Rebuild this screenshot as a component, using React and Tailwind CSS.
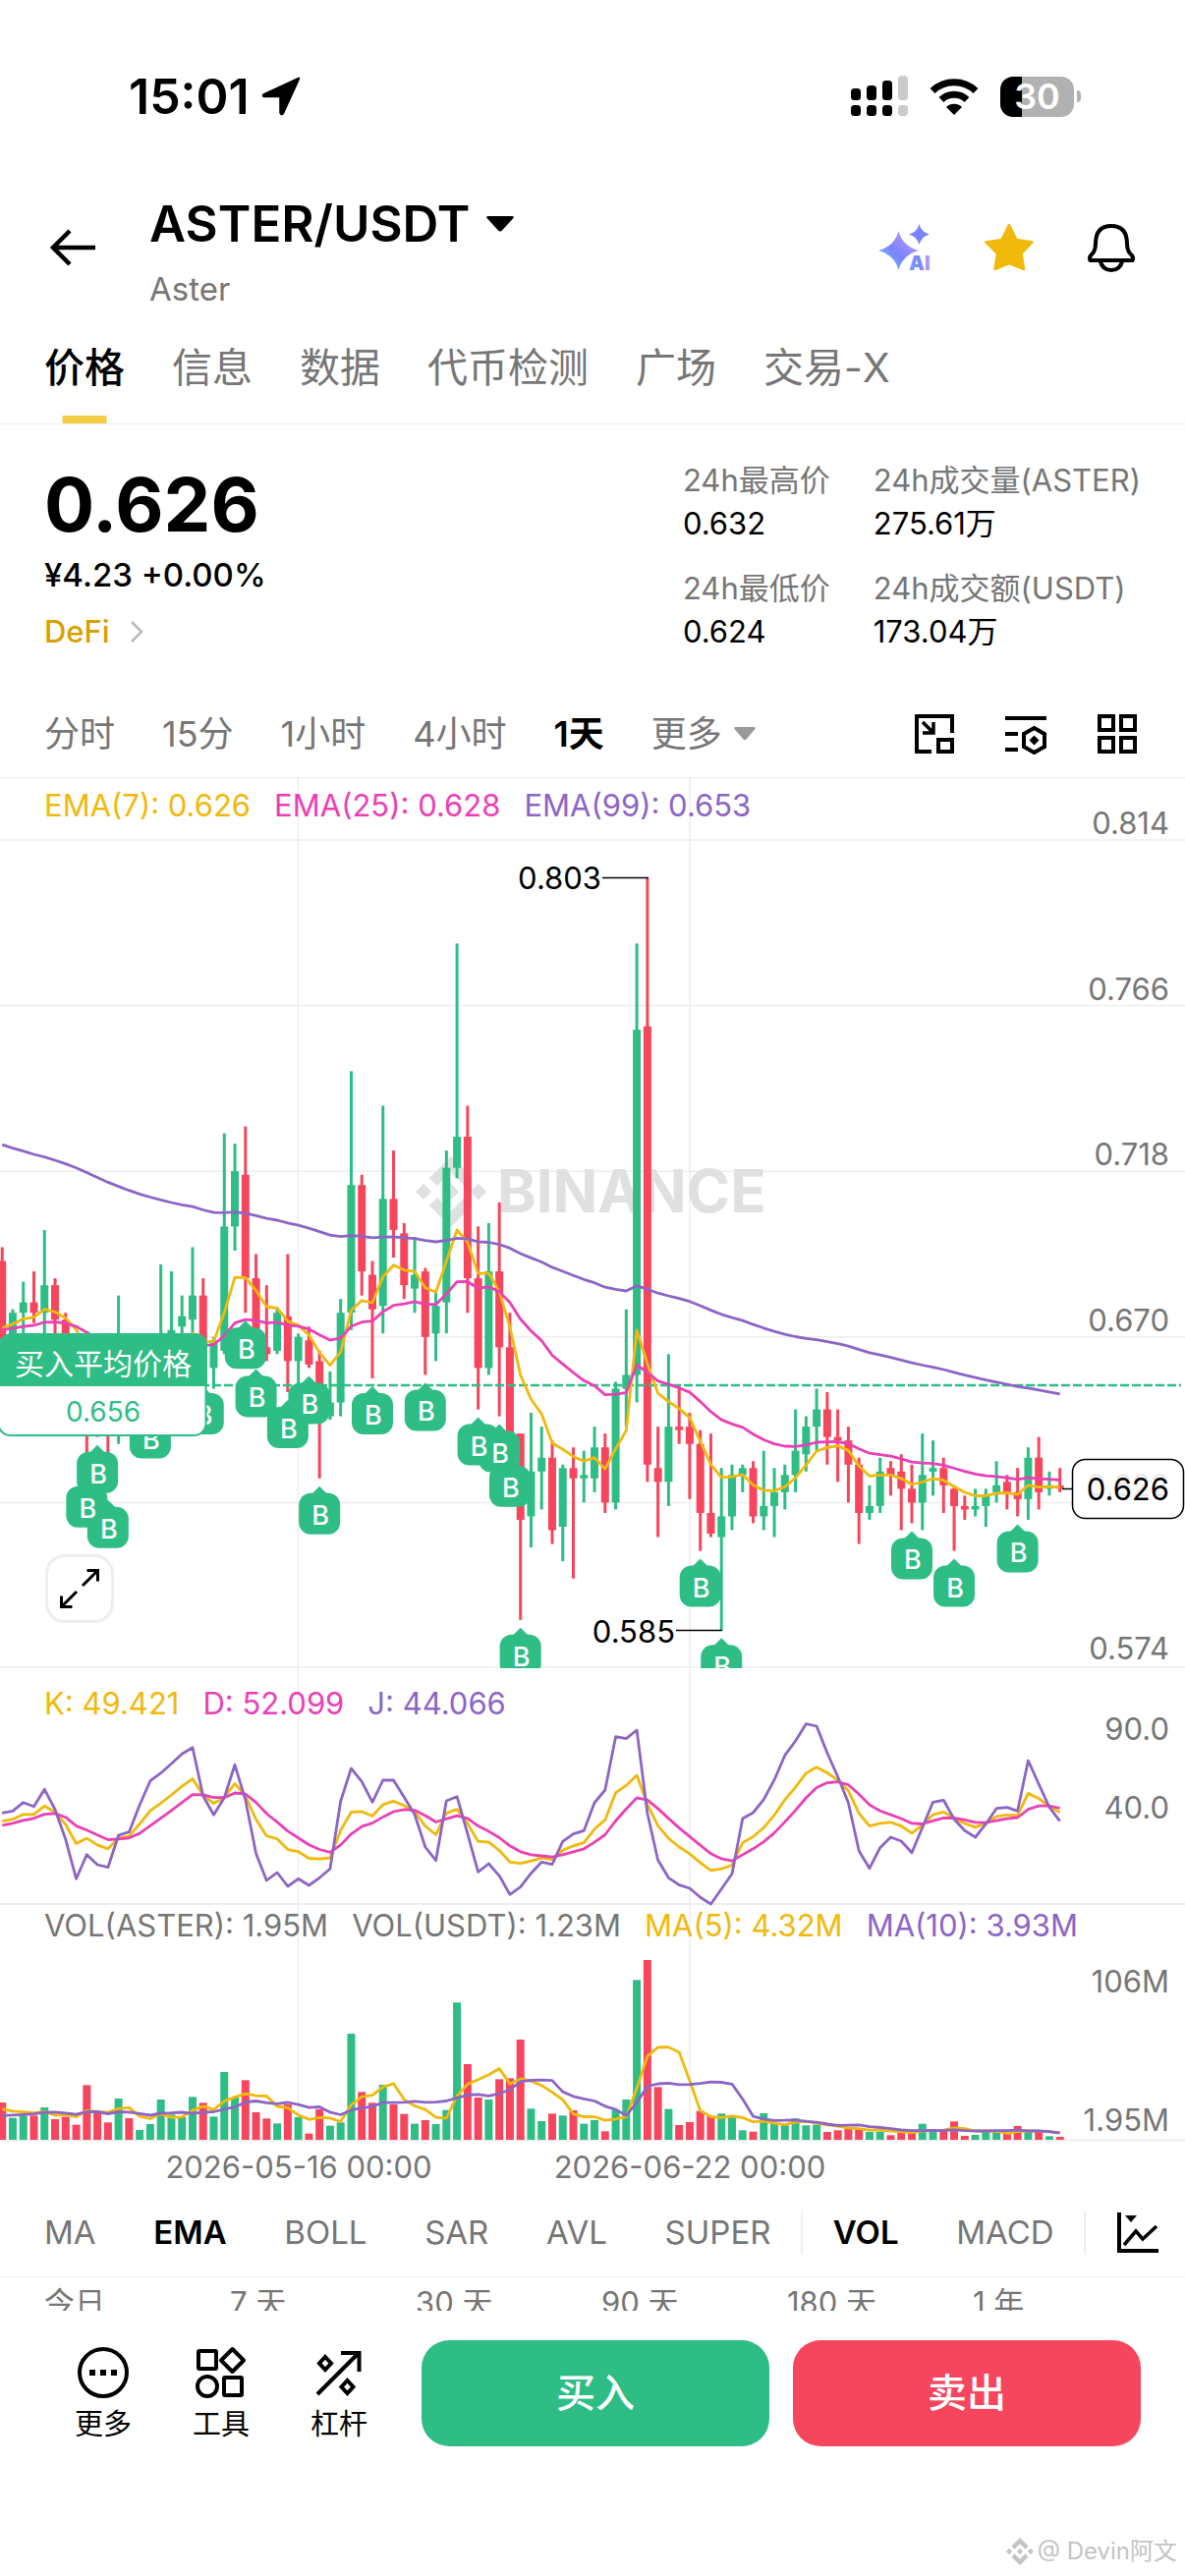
import React from 'react';
import { SiBinance } from 'react-icons/si';

const UP = '#2ebd85';
const DOWN = '#f6465d';
const YELLOW = '#f0b90b';
const PINK = '#eb40b5';
const PURPLE = '#8c65c5';
const GRID = '#eeeeee';
const MUTED = '#767676';

// [side, high, bodyTop, bodyBottom, low, volume], prices in 1/1000 USDT
const CANDLES = [
    ['d', 696, 692, 668, 660, 114], ['u', 678, 677, 665, 660, 67], ['u', 686, 680, 677, 660, 74],
    ['d', 689, 680, 677, 674, 74], ['u', 701, 685, 677, 665, 99], ['d', 687, 685, 675, 665, 63],
    ['d', 677, 675, 670, 660, 70], ['d', 669, 667, 662, 655, 46], ['d', 664, 662, 650, 631, 167],
    ['d', 660, 655, 648, 641, 82], ['d', 658, 652, 645, 625, 53], ['u', 682, 655, 645, 639, 126],
    ['d', 665, 658, 656, 652, 66], ['u', 668, 660, 655, 650, 30], ['u', 670, 666, 660, 651, 48],
    ['u', 691, 670, 664, 660, 123], ['u', 689, 672, 668, 660, 77], ['u', 682, 676, 673, 664, 69],
    ['u', 696, 682, 675, 671, 131], ['d', 687, 682, 661, 658, 113], ['u', 670, 669, 661, 655, 71],
    ['u', 729, 702, 666, 665, 207], ['u', 726, 718, 702, 695, 129], ['d', 731, 717, 687, 677, 182],
    ['d', 694, 687, 672, 663, 84], ['d', 685, 667, 665, 663, 65], ['u', 678, 677, 666, 665, 50],
    ['d', 694, 676, 663, 654, 108], ['u', 671, 670, 663, 654, 69], ['d', 673, 669, 662, 661, 19],
    ['d', 666, 663, 650, 629, 93], ['u', 660, 651, 647, 646, 43], ['u', 681, 677, 651, 647, 53],
    ['u', 747, 714, 677, 672, 324], ['d', 717, 714, 689, 682, 146], ['d', 692, 688, 678, 658, 113],
    ['u', 737, 710, 679, 671, 168], ['d', 724, 710, 701, 693, 108], ['d', 703, 700, 685, 681, 79],
    ['u', 699, 688, 684, 677, 49], ['d', 690, 689, 670, 659, 60], ['u', 683, 679, 671, 663, 48],
    ['u', 724, 719, 680, 671, 91], ['u', 784, 728, 719, 716, 419], ['d', 737, 728, 687, 677, 231],
    ['d', 702, 687, 661, 649, 129], ['u', 703, 689, 661, 659, 123], ['d', 709, 689, 667, 647, 185],
    ['d', 677, 667, 642, 637, 188], ['d', 642, 642, 617, 588, 306], ['u', 648, 631, 618, 609, 95],
    ['u', 644, 635, 631, 620, 57], ['d', 640, 635, 614, 610, 80], ['u', 633, 632, 615, 605, 74],
    ['d', 638, 632, 629, 600, 90], ['u', 637, 630, 629, 622, 49], ['u', 644, 638, 629, 625, 60],
    ['d', 642, 638, 622, 619, 26], ['u', 657, 655, 622, 620, 91], ['u', 678, 659, 655, 644, 123],
    ['u', 784, 759, 659, 651, 488], ['d', 803, 760, 633, 628, 549], ['d', 644, 632, 628, 612, 161],
    ['u', 665, 644, 628, 621, 94], ['d', 656, 644, 643, 639, 45], ['d', 648, 644, 639, 623, 54],
    ['d', 643, 639, 619, 608, 88], ['d', 642, 619, 613, 612, 72], ['u', 632, 618, 612, 585, 80],
    ['u', 633, 630, 618, 614, 69], ['u', 633, 632, 630, 625, 29], ['d', 634, 632, 618, 616, 25],
    ['u', 637, 621, 618, 614, 81], ['u', 632, 625, 621, 612, 48], ['u', 633, 630, 625, 620, 48],
    ['u', 649, 637, 630, 625, 65], ['u', 647, 644, 636, 631, 44], ['u', 655, 649, 644, 637, 46],
    ['d', 654, 649, 641, 633, 24], ['d', 649, 641, 640, 628, 29], ['d', 644, 640, 633, 622, 34],
    ['d', 635, 633, 619, 610, 36], ['u', 627, 621, 619, 617, 24], ['u', 635, 631, 621, 619, 25],
    ['d', 634, 632, 630, 624, 14], ['d', 636, 631, 626, 614, 23], ['d', 633, 626, 622, 616, 25],
    ['u', 642, 630, 622, 614, 49], ['u', 640, 632, 631, 624, 25], ['d', 635, 632, 627, 619, 27],
    ['d', 627, 626, 621, 608, 56], ['d', 624, 621, 620, 617, 12], ['u', 626, 621, 620, 618, 15],
    ['u', 626, 624, 621, 615, 25], ['u', 634, 627, 625, 622, 23], ['d', 630, 628, 625, 620, 22],
    ['d', 632, 625, 623, 618, 42], ['u', 638, 635, 623, 617, 23], ['d', 641, 635, 625, 620, 24],
    ['u', 631, 627, 626, 624, 11], ['d', 632, 627, 626, 625, 9],
];

// volumes just left of the visible range, needed by the moving averages
const EARLIER_VOLUMES = [54, 54, 54, 54, 54, 100, 85, 90, 80];

// J line of the KDJ study, as a distance from the top of its panel
const J_LINE = [
    436, 430, 404, 416, 364, 425, 517, 637, 563, 594, 602, 504, 494, 412, 338, 314, 286, 256, 236, 384,
    442, 389, 289, 396, 560, 642, 618, 660, 637, 657, 634, 607, 400, 300, 340, 403, 336, 336, 388, 440,
    540, 581, 399, 386, 500, 616, 591, 628, 685, 662, 620, 586, 593, 523, 500, 490, 405, 366, 203, 209,
    183, 437, 580, 634, 656, 666, 694, 714, 668, 622, 453, 435, 395, 335, 260, 216, 164, 171, 253, 325,
    405, 552, 605, 542, 510, 522, 557, 480, 403, 397, 455, 490, 510, 470, 422, 419, 430, 276, 348, 418,
    461,
];

// candles that carry a buy marker
const BUYS = [8, 9, 10, 14, 19, 23, 24, 27, 29, 30, 35, 40, 45, 47, 48, 49, 66, 68, 86, 90, 96];

const xAt = (i) => 2.2 + i * 10.765;
const priceY = (p) => 63 + (814 - p) * 3.5125;
const points = (values, toY) => values.map((v, i) => `${xAt(i).toFixed(1)},${toY(v).toFixed(1)}`).join(' ');

const ema = (period, seed) => {
    const k = 2 / (period + 1);
    const out = [seed];
    for (let i = 1; i < CANDLES.length; i++) {
        const [side, , top, bottom] = CANDLES[i];
        const close = side === 'u' ? top : bottom;
        out.push(out[i - 1] + (close - out[i - 1]) * k);
    }
    return out;
};

const volumeMa = (period) => {
    const all = [...EARLIER_VOLUMES, ...CANDLES.map((c) => c[5])];
    return CANDLES.map((_, i) => {
        const end = i + EARLIER_VOLUMES.length + 1;
        return all.slice(end - period, end).reduce((a, b) => a + b, 0) / period;
    });
};

const dLine = J_LINE.reduce((acc, j, i) => [...acc, i === 0 ? 474 : (6 * acc[i - 1] + j) / 7], []);
const kLine = dLine.map((d, i) => (J_LINE[i] + 2 * d) / 3);

const Line = ({ pts, color }) => (
    <polyline points={pts} fill="none" stroke={color} strokeWidth="2.8" strokeLinejoin="round" />
);

const Columns = ({ height }) => (
    <path d={`M303.5 0V${height}M702 0V${height}`} stroke={GRID} strokeWidth="1.5" />
);

const AxisLabel = ({ y, children }) => (
    <text x="1190" y={y} textAnchor="end" fontSize="31" fill={MUTED}>{children}</text>
);

const markerTip = (index) => priceY(CANDLES[index][4]) + 8;

// Boxes first, so that a neighbouring box never covers a letter
const BuyMarkers = () => (
    <>
        {BUYS.map((i) => (
            <g key={i} fill={UP}>
                <path d={`M${xAt(i)} ${markerTip(i)}l8 8h-16z`} />
                <rect x={xAt(i) - 21} y={markerTip(i) + 7} width="42" height="42" rx="12" />
            </g>
        ))}
        {BUYS.map((i) => (
            <text key={i} x={xAt(i) + 1} y={markerTip(i) + 39} textAnchor="middle" fontSize="27" fontWeight="500" fill="#fff">B</text>
        ))}
    </>
);

const Legend = ({ items, className }) => (
    <div className={`absolute inset-x-0 flex gap-6 px-[45px] text-[31px] leading-10 whitespace-nowrap ${className}`}>
        {items.map(([text, color]) => (
            <span key={text} className={color}>{text}</span>
        ))}
    </div>
);

const PriceChart = () => (
    <div className="relative">
        <svg viewBox="0 0 1206 906" className="block w-full">
            <Columns height={906} />
            {[63, 231.6, 400.2, 568.8, 737.4, 905].map((y) => (
                <path key={y} d={`M0 ${y}H1206`} stroke={GRID} strokeWidth="1.5" />
            ))}
            <SiBinance x={423} y={385} size={72} color="#e0e0e0" />
            <text x="506" y="442" fontSize="60" fontWeight="700" fill="#e0e0e0">BINANCE</text>

            {CANDLES.map(([side, high, top, bottom, low], i) => (
                <g key={i} fill={side === 'u' ? UP : DOWN}>
                    <rect x={xAt(i) - 1.5} y={priceY(high)} width="3" height={priceY(low) - priceY(high)} />
                    <rect x={xAt(i) - 4} y={priceY(top)} width="8" height={priceY(bottom) - priceY(top)} />
                </g>
            ))}

            <path d="M0 618H1202" stroke={UP} strokeWidth="2.5" strokeDasharray="9 3" />
            <Line pts={points(ema(7, 672.6), priceY)} color={YELLOW} />
            <Line pts={points(ema(25, 672.1), priceY)} color={PINK} />
            <Line pts={points(ema(99, 725.7), priceY)} color={PURPLE} />
            <BuyMarkers />

            {/* Highest and lowest price of the visible range */}
            <path d="M613 101.5H660M688 867.5H735" stroke="#000" strokeWidth="1.5" />
            <text x="612" y="113" textAnchor="end" fontSize="31">0.803</text>
            <text x="687" y="880" textAnchor="end" fontSize="31">0.585</text>

            <AxisLabel y="57">0.814</AxisLabel>
            <AxisLabel y="226">0.766</AxisLabel>
            <AxisLabel y="394">0.718</AxisLabel>
            <AxisLabel y="563">0.670</AxisLabel>
            <AxisLabel y="731">0.622</AxisLabel>
            <AxisLabel y="897">0.574</AxisLabel>

            {/* Last price */}
            <path d="M1081 723.5H1091" stroke="#000" strokeWidth="1.5" />
            <rect x="1091.5" y="693.5" width="113" height="60" rx="13" fill="#fff" fillOpacity="0.85" stroke="#000" strokeWidth="1.5" />
            <text x="1190" y="735" textAnchor="end" fontSize="31">0.626</text>

            {/* Average buy price */}
            <rect x="-1.5" y="567" width="211" height="102" rx="12" fill="#fff" stroke={UP} strokeWidth="2" />
            <path d="M0 619V577a12 12 0 0 1 12-12H199a12 12 0 0 1 12 12V619Z" fill={UP} />
            <text x="105" y="607" textAnchor="middle" fontSize="30" fill="#fff">买入平均价格</text>
            <text x="105" y="655" textAnchor="middle" fontSize="28" fill={UP}>0.656</text>
        </svg>
        <Legend
            className="top-2"
            items={[
                ['EMA(7): 0.626', 'text-[#f0b90b]'],
                ['EMA(25): 0.628', 'text-[#eb40b5]'],
                ['EMA(99): 0.653', 'text-[#8c65c5]'],
            ]}
        />
        <button aria-label="全屏" className="absolute bottom-[46px] left-[46px] flex size-[70px] items-center justify-center rounded-[20px] border-3 border-[#eeeeee] bg-white">
            <svg viewBox="0 0 40 40" className="size-10" fill="none" stroke="#000" strokeWidth="3">
                <path d="M23 17L38 2M27.5 1.5H38.5V12.5M17 23L2 38M1.5 27.5V38.5H12.5" />
            </svg>
        </button>
    </div>
);

const KdjChart = () => (
    <div className="relative">
        <svg viewBox="0 0 1206 240" className="block w-full overflow-visible">
            <Columns height={240} />
            <path d="M0 240H1206" stroke={GRID} strokeWidth="2" />
            <Line pts={points(kLine, (y) => 2 + y / 3)} color={YELLOW} />
            <Line pts={points(dLine, (y) => 2 + y / 3)} color={PINK} />
            <Line pts={points(J_LINE, (y) => 2 + y / 3)} color={PURPLE} />
            <AxisLabel y="73">90.0</AxisLabel>
            <AxisLabel y="153">40.0</AxisLabel>
        </svg>
        <Legend
            className="top-4"
            items={[
                ['K: 49.421', 'text-[#f0b90b]'],
                ['D: 52.099', 'text-[#eb40b5]'],
                ['J: 44.066', 'text-[#8c65c5]'],
            ]}
        />
    </div>
);

const VolumeChart = () => (
    <div className="relative">
        <svg viewBox="0 0 1206 290" className="block w-full">
            <Columns height={240} />
            <path d="M0 240.5H1206" stroke={GRID} strokeWidth="2" />
            {CANDLES.map(([side, , , , , volume], i) => (
                <rect key={i} x={xAt(i) - 4} y={240 - volume / 3} width="8" height={volume / 3} fill={side === 'u' ? UP : DOWN} />
            ))}
            <Line pts={points(volumeMa(5), (v) => 240 - v / 3)} color={YELLOW} />
            <Line pts={points(volumeMa(10), (v) => 240 - v / 3)} color={PURPLE} />
            <AxisLabel y="90">106M</AxisLabel>
            <AxisLabel y="231">1.95M</AxisLabel>
            <text x="304" y="279" textAnchor="middle" fontSize="31" fill={MUTED}>2026-05-16 00:00</text>
            <text x="702" y="279" textAnchor="middle" fontSize="31" fill={MUTED}>2026-06-22 00:00</text>
        </svg>
        <Legend
            className="top-0.5"
            items={[
                ['VOL(ASTER): 1.95M', 'text-[#767676]'],
                ['VOL(USDT): 1.23M', 'text-[#767676]'],
                ['MA(5): 4.32M', 'text-[#f0b90b]'],
                ['MA(10): 3.93M', 'text-[#8c65c5]'],
            ]}
        />
    </div>
);

const StatusBar = () => (
    <div className="flex h-[196px] items-center justify-between pr-[106px] pl-[131px]">
        <div className="flex items-center gap-3">
            <span className="text-[50px] leading-none font-semibold">15:01</span>
            <svg viewBox="0 0 40 40" className="size-10">
                <path d="M38 2L2.5 18.5Q1 20 3.5 20H19.5V36.5Q20.5 39.5 22 37Z" stroke="#000" strokeWidth="2.5" strokeLinejoin="round" />
            </svg>
        </div>
        <div className="flex items-center gap-[22px]">
            <svg viewBox="0 0 58 42" className="h-[42px] w-[58px]">
                <rect x="0" y="13" width="10" height="12" rx="3.5" />
                <rect x="16" y="10" width="10" height="15" rx="3.5" />
                <rect x="32" y="5" width="10" height="20" rx="3.5" />
                <rect x="48" y="0" width="10" height="25" rx="3.5" fill="#cbcbcb" />
                <rect x="0" y="30" width="10" height="11" rx="3.5" />
                <rect x="16" y="30" width="10" height="11" rx="3.5" />
                <rect x="32" y="30" width="10" height="11" rx="3.5" />
                <rect x="48" y="30" width="10" height="11" rx="3.5" fill="#cbcbcb" />
            </svg>
            <svg viewBox="0 0 50 38" className="h-[38px] w-[50px]">
                <path d="M3 13.5A32 32 0 0 1 47 13.5M12 22.5A19 19 0 0 1 38 22.5" fill="none" stroke="#000" strokeWidth="7" />
                <path d="M25 38L17 30A11.5 11.5 0 0 1 33 30Z" />
            </svg>
            <div className="flex items-center gap-[3px]">
                <div className="flex h-[41px] w-[75px] items-center justify-center rounded-[13px] bg-linear-to-r from-black from-30% to-[#b1b1b1] to-30% text-[36px] leading-none font-semibold text-white">30</div>
                <div className="h-3 w-1 rounded-r-full bg-[#b1b1b1]" />
            </div>
        </div>
    </div>
);

const Header = () => (
    <header className="flex items-start px-[50px]">
        <button aria-label="返回" className="flex h-28 w-[102px] items-center">
            <svg viewBox="0 0 48 40" className="h-10 w-12" fill="none" stroke="#000" strokeWidth="4.5">
                <path d="M47 20H5M21 3L4 20L21 37" />
            </svg>
        </button>
        <div className="flex-1">
            <button className="flex items-center gap-4 text-[51px] leading-[64px] font-semibold">
                ASTER/USDT
                <svg viewBox="0 0 28 16" className="h-4 w-7"><path d="M2 0H26Q29 0 27 2.5L16 14.5Q14 16.5 12 14.5L1 2.5Q-1 0 2 0Z" /></svg>
            </button>
            <p className="mt-[15px] text-[33px] leading-[38px] text-[#767676]">Aster</p>
        </div>
        <div className="flex h-28 items-center gap-[54px]">
            <button aria-label="AI">
                <svg viewBox="0 0 54 50" className="h-[50px] w-[54px] overflow-visible">
                    <defs>
                        <linearGradient id="ai" x1="0" y1="1" x2="1" y2="0">
                            <stop offset="0.15" stopColor="#6fb4ff" />
                            <stop offset="0.45" stopColor="#7b83ff" />
                            <stop offset="0.75" stopColor="#a896ff" />
                        </linearGradient>
                        <linearGradient id="ai-text">
                            <stop offset="0" stopColor="#72a3ff" />
                            <stop offset="0.5" stopColor="#7b83ff" />
                            <stop offset="1" stopColor="#c79af5" />
                        </linearGradient>
                    </defs>
                    <path d="M20.5 8Q24.5 23.5 41 28Q24.5 32.5 20.5 48Q16.5 32.5 0 28Q16.5 23.5 20.5 8Z" fill="url(#ai)" />
                    <path d="M41.5 1Q43.5 9 52 11.5Q43.5 14 41.5 22Q39.5 14 31 11.5Q39.5 9 41.5 1Z" fill="#7b83ff" />
                    <text x="31" y="48" fontSize="20" fontWeight="900" fill="url(#ai-text)" stroke="#fff" strokeWidth="3" paintOrder="stroke">AI</text>
                </svg>
            </button>
            <button aria-label="自选">
                <svg viewBox="0 0 50 50" className="size-[50px]">
                    <path d="M25 2L32.5 17L48.5 19.5L37.5 31L40 47L25 41L10.5 47L13 31L1.5 19.5L17.5 17Z" fill="#f0b90b" stroke="#f0b90b" strokeWidth="2.5" strokeLinejoin="round" />
                </svg>
            </button>
            <button aria-label="提醒">
                <svg viewBox="0 0 50 50" className="size-[50px]" fill="none" stroke="#000" strokeWidth="4" strokeLinejoin="round">
                    <path d="M9 21Q9 3 25 3Q41 3 41 21Q41 29 45.5 32.5Q48 35 46.5 38H3.5Q2 35 4.5 32.5Q9 29 9 21Z" />
                    <path d="M13.5 38Q16 48 25 48Q34 48 36.5 38" />
                </svg>
            </button>
        </div>
    </header>
);

const TABS = ['价格', '信息', '数据', '代币检测', '广场', '交易-X'];

const Tabs = () => (
    <nav className="flex h-[119px] gap-12 border-b border-[#eeeeee] px-[45px] text-[41px] whitespace-nowrap">
        {TABS.map((tab, i) => (
            <a key={tab} href="#" className={i === 0 ? 'relative flex items-center pt-1.5 font-medium text-black' : 'relative flex items-center pt-1.5 text-[#767676]'}>
                {tab}
                {i === 0 && <span className="absolute bottom-0 left-1/2 h-2 w-[45px] -translate-x-1/2 bg-[#f5cd45]" />}
            </a>
        ))}
    </nav>
);

const STATS = [
    ['24h最高价', '0.632'],
    ['24h成交量(ASTER)', '275.61万'],
    ['24h最低价', '0.624'],
    ['24h成交额(USDT)', '173.04万'],
];

const Summary = () => (
    <section className="flex justify-between px-[45px] pt-[33px] pb-[38px]">
        <div>
            <div className="text-[76px] leading-[96px] font-bold">0.626</div>
            <div className="mt-0.5 text-[33px] leading-11 font-medium">¥4.23 +0.00%</div>
            <a href="#" className="mt-4 flex items-center gap-5 text-[31px] leading-10 font-medium text-[#d89f00]">
                DeFi
                <svg viewBox="0 0 14 22" className="h-[22px] w-3.5" fill="none" stroke="#b8b8b8" strokeWidth="2.5"><path d="M2 1L12 11L2 21" /></svg>
            </a>
        </div>
        <dl className="grid grid-cols-[auto_auto] gap-x-11 gap-y-[22px] pt-0.5 text-[31px] leading-11">
            {STATS.map(([label, value]) => (
                <div key={label}>
                    <dt className="text-[#767676]">{label}</dt>
                    <dd>{value}</dd>
                </div>
            ))}
        </dl>
    </section>
);

const PERIODS = ['分时', '15分', '1小时', '4小时', '1天'];

const Periods = () => (
    <div className="flex h-[89px] items-center justify-between border-b border-[#eeeeee] pr-12 pl-[45px]">
        <div className="flex items-center gap-12 text-[36px] whitespace-nowrap text-[#767676]">
            {PERIODS.map((period) => (
                <button key={period} className={period === '1天' ? 'font-semibold text-black' : ''}>{period}</button>
            ))}
            <button className="flex items-center gap-3">
                更多
                <svg viewBox="0 0 22 14" className="h-3.5 w-[22px]"><path d="M2 0H20Q23 0 21 2.5L12.5 12.5Q11 14 9.5 12.5L1 2.5Q-1 0 2 0Z" fill="#999" /></svg>
            </button>
        </div>
        <div className="flex items-center gap-[51px]">
            <button aria-label="小窗">
                <svg viewBox="0 0 42 42" className="size-[42px]" fill="none" stroke="#000" strokeWidth="4">
                    <path d="M39 20V3H3V39H18" />
                    <rect x="25" y="27" width="14" height="12" />
                    <path d="M9 9L19 19M20 9V20H9" strokeWidth="3.5" />
                </svg>
            </button>
            <button aria-label="指标设置">
                <svg viewBox="0 0 42 42" className="size-[42px]" fill="none" stroke="#000" strokeWidth="4">
                    <path d="M0 5H42M0 21H13M0 37H13" />
                    <path d="M29.5 15L40 21V34L29.5 40L19 34V21Z" />
                    <path d="M29.5 22.5L34.5 27.5L29.5 32.5L24.5 27.5Z" fill="#000" stroke="none" />
                </svg>
            </button>
            <button aria-label="布局">
                <svg viewBox="0 0 42 42" className="size-[42px]" fill="none" stroke="#000" strokeWidth="4">
                    <rect x="3" y="3" width="14" height="14" />
                    <rect x="25" y="3" width="14" height="14" />
                    <rect x="3" y="25" width="14" height="14" />
                    <rect x="25" y="25" width="14" height="14" />
                </svg>
            </button>
        </div>
    </div>
);

const Indicator = ({ active, children }) => (
    <button className={active ? 'font-semibold text-black' : ''}>{children}</button>
);

const Indicators = () => (
    <div className="flex h-[90px] items-center justify-between border-b border-[#eeeeee] pr-[26px] pl-[45px] text-[33px] text-[#767676]">
        <Indicator>MA</Indicator>
        <Indicator active>EMA</Indicator>
        <Indicator>BOLL</Indicator>
        <Indicator>SAR</Indicator>
        <Indicator>AVL</Indicator>
        <Indicator>SUPER</Indicator>
        <div className="-mx-7 h-11 w-0.5 bg-[#eeeeee]" />
        <Indicator active>VOL</Indicator>
        <Indicator>MACD</Indicator>
        <div className="-mx-7 h-11 w-0.5 bg-[#eeeeee]" />
        <button aria-label="更多指标">
            <svg viewBox="0 0 44 44" className="size-11" fill="none" stroke="#000" strokeWidth="4">
                <path d="M3 1V40H43" />
                <path d="M8 34L20 20L27 28L41 15" strokeWidth="3.5" />
                <path d="M9 4H21L15 11Z" fill="#000" stroke="none" />
            </svg>
        </button>
    </div>
);

const RANGES = ['今日', '7 天', '30 天', '90 天', '180 天', '1 年'];

const Ranges = () => (
    <div className="grid h-[34px] grid-cols-6 overflow-hidden pt-1 pr-[27px] pl-[45px] text-[31px] leading-11 text-[#767676]">
        {RANGES.map((range) => <span key={range}>{range}</span>)}
    </div>
);

const MoreIcon = () => (
    <svg viewBox="0 0 54 54" className="size-[54px]">
        <circle cx="27" cy="27" r="24" fill="none" stroke="#000" strokeWidth="4" />
        <path d="M13 24H19V30H13ZM24 24H30V30H24ZM35 24H41V30H35Z" />
    </svg>
);

const ToolsIcon = () => (
    <svg viewBox="0 0 54 54" className="size-[54px]" fill="none" stroke="#000" strokeWidth="4">
        <rect x="4" y="5" width="18" height="18" rx="1" />
        <path d="M38.5 3L50 14.5L38.5 26L27 14.5Z" strokeLinejoin="round" />
        <circle cx="13" cy="41" r="10" />
        <rect x="30" y="32" width="18" height="18" rx="1" />
    </svg>
);

const LeverIcon = () => (
    <svg viewBox="0 0 54 54" className="size-[54px]" fill="none" stroke="#000" strokeWidth="4">
        <path d="M5 49L47 7M29 7H47.5V26" />
        <path d="M13 11L19 17.5L13 24L7 17.5Z" />
        <path d="M35.5 35L41.5 41.5L35.5 48L29.5 41.5Z" />
    </svg>
);

const ACTIONS = [
    ['更多', MoreIcon],
    ['工具', ToolsIcon],
    ['杠杆', LeverIcon],
];

const Footer = () => (
    <footer className="pt-[30px]">
        <div className="flex items-center gap-6 px-[45px]">
            <div className="flex pt-1">
                {ACTIONS.map(([label, Icon]) => (
                    <button key={label} className="flex w-[120px] flex-col items-center gap-1.5 text-[29px] leading-10">
                        <Icon />
                        {label}
                    </button>
                ))}
            </div>
            <button className="h-[108px] flex-1 rounded-[28px] bg-[#2ebd85] text-[40px] font-medium text-white">买入</button>
            <button className="h-[108px] flex-1 rounded-[28px] bg-[#f6465d] text-[40px] font-medium text-white">卖出</button>
        </div>
        <div className="mt-[91px] flex items-center justify-end gap-1 pr-2 pb-[9px] text-[24px] leading-8 text-[#c4c4c4]">
            <SiBinance className="size-7" />
            <span>@ Devin阿文</span>
        </div>
    </footer>
);

function App() {
    return (
        <div className="min-h-screen w-full overflow-x-hidden bg-white font-['Inter','Noto_Sans_CJK_SC',sans-serif] text-black">
            <StatusBar />
            <Header />
            <Tabs />
            <Summary />
            <Periods />
            <PriceChart />
            <KdjChart />
            <VolumeChart />
            <Indicators />
            <Ranges />
            <Footer />
        </div>
    );
}

export default App;
